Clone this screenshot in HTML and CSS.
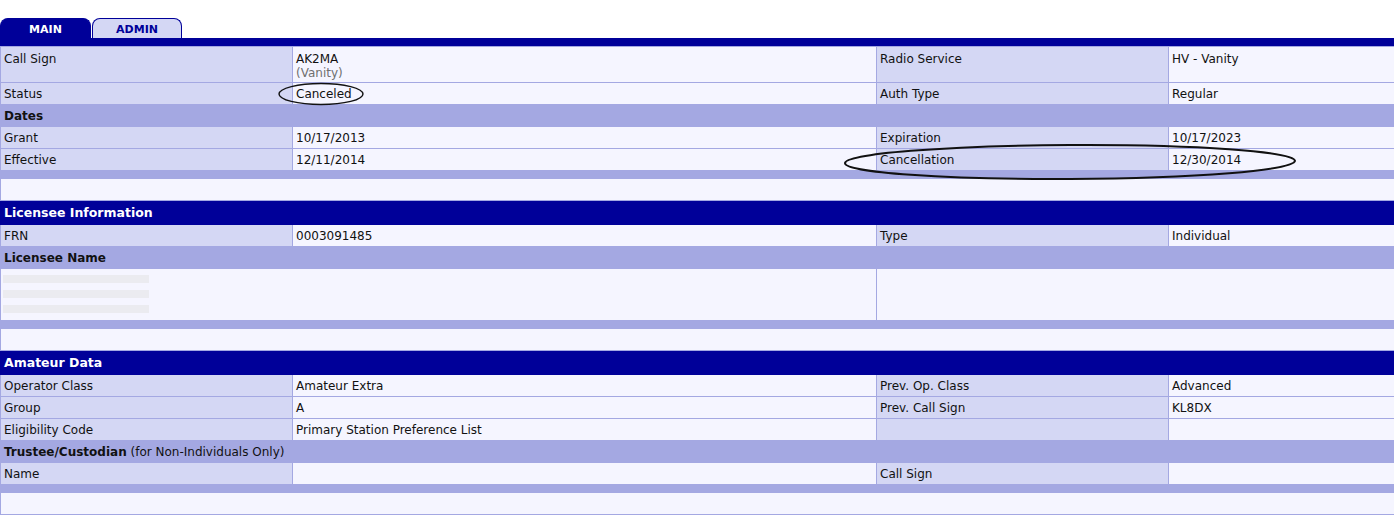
FILE: index.html
```html
<!DOCTYPE html>
<html>
<head>
<meta charset="utf-8">
<link rel="stylesheet" href="styles.css">
</head>
<body>
<div class="page">
  <div class="tabs">
    <div class="tab tab-active">MAIN</div>
    <div class="tab tab-idle">ADMIN</div>
  </div>
  <div class="topbar"></div>
  <table class="lic">
    <colgroup>
      <col class="c1"><col class="c2"><col class="c3"><col class="c4">
    </colgroup>
    <tr>
      <td class="lab tall">Call Sign</td>
      <td class="val tall">AK2MA<br><span class="sub">(Vanity)</span></td>
      <td class="lab tall">Radio Service</td>
      <td class="val tall">HV - Vanity</td>
    </tr>
    <tr>
      <td class="lab">Status</td><td class="val">Canceled</td>
      <td class="lab">Auth Type</td><td class="val">Regular</td>
    </tr>
    <tr><td class="med" colspan="4"><b>Dates</b></td></tr>
    <tr>
      <td class="lab">Grant</td><td class="val">10/17/2013</td>
      <td class="lab">Expiration</td><td class="val">10/17/2023</td>
    </tr>
    <tr>
      <td class="lab">Effective</td><td class="val">12/11/2014</td>
      <td class="lab">Cancellation</td><td class="val">12/30/2014</td>
    </tr>
    <tr><td class="strip" colspan="4"></td></tr>
    <tr><td class="blank" colspan="4"></td></tr>

    <tr><td class="dark" colspan="4">Licensee Information</td></tr>
    <tr>
      <td class="lab">FRN</td><td class="val">0003091485</td>
      <td class="lab">Type</td><td class="val">Individual</td>
    </tr>
    <tr><td class="med" colspan="4"><b>Licensee Name</b></td></tr>
    <tr>
      <td class="val namebox" colspan="2">
        <div class="redact"><span></span><span></span><span></span></div>
      </td>
      <td class="val namebox" colspan="2"></td>
    </tr>
    <tr><td class="strip" colspan="4"></td></tr>
    <tr><td class="blank" colspan="4"></td></tr>

    <tr><td class="dark" colspan="4">Amateur Data</td></tr>
    <tr>
      <td class="lab">Operator Class</td><td class="val">Amateur Extra</td>
      <td class="lab">Prev. Op. Class</td><td class="val">Advanced</td>
    </tr>
    <tr>
      <td class="lab">Group</td><td class="val">A</td>
      <td class="lab">Prev. Call Sign</td><td class="val">KL8DX</td>
    </tr>
    <tr>
      <td class="lab">Eligibility Code</td><td class="val">Primary Station Preference List</td>
      <td class="lab"></td><td class="val"></td>
    </tr>
    <tr><td class="med" colspan="4"><b>Trustee/Custodian</b> (for Non-Individuals Only)</td></tr>
    <tr>
      <td class="lab">Name</td><td class="val"></td>
      <td class="lab">Call Sign</td><td class="val"></td>
    </tr>
    <tr><td class="strip" colspan="4"></td></tr>
    <tr><td class="blank" colspan="4"></td></tr>
  </table>

  <svg class="marks" width="1394" height="531" viewBox="0 0 1394 531">
    <ellipse cx="321" cy="94" rx="42" ry="10.5" fill="none" stroke="#111" stroke-width="1.4"/>
    <ellipse cx="1070" cy="162" rx="225" ry="17" fill="none" stroke="#111" stroke-width="2" transform="rotate(-0.3 1070 162)"/>
  </svg>
</div>
</body>
</html>
```
FILE: styles.css
```css
html, body {
  margin: 0;
  padding: 0;
  background: #ffffff;
}
.page {
  position: relative;
  width: 1394px;
  padding-top: 18px;
  font-family: "DejaVu Sans", Verdana, sans-serif;
  font-size: 12px;
  color: #111;
}
.tabs {
  display: flex;
  gap: 1px;
  height: 20px;
}
.tab {
  width: 88px;
  height: 19px;
  border-radius: 8px 8px 0 0;
  font-weight: bold;
  font-size: 11px;
  line-height: 22px;
  text-align: center;
  border: 1px solid #000099;
  border-bottom: none;
}
.tab-active {
  background: #000099;
  color: #ffffff;
  width: 89px;
}
.tab-idle {
  background: #d4d7f4;
  color: #000099;
}
.topbar {
  height: 8px;
  background: #000099;
}
.lic {
  width: 1394px;
  border-collapse: collapse;
  table-layout: fixed;
}
.c1 { width: 292px; }
.c2 { width: 584px; }
.c3 { width: 292px; }
.c4 { width: 226px; }
.lic td {
  border: 1px solid #a4a8e2;
  padding: 4px 3px 2px 3px;
  height: 15px;
  line-height: 15px;
  vertical-align: top;
}
.lic td.lab { background: #d4d7f4; }
.lic td.val { background: #f5f5ff; }
.lic td.tall { height: 29px; line-height: 14px; padding-top: 5px; padding-bottom: 1px; }
.sub { color: #707070; }
.lic td.med {
  background: #a4a8e2;
  border-color: #a4a8e2;
  color: #111;
}
.lic td.dark {
  background: #000099;
  border-color: #000099;
  color: #ffffff;
  font-weight: bold;
  font-size: 12.5px;
  height: 17px;
  line-height: 17px;
  padding-top: 3px;
  padding-bottom: 3px;
}
.lic td.strip {
  background: #a4a8e2;
  border-color: #a4a8e2;
  height: 7px;
  padding: 0;
}
.lic td.blank {
  background: #f5f5ff;
  height: 15px;
}
.lic td.namebox {
  height: 45px;
  padding: 6px 2px 0 2px;
}
.redact {
  display: flex;
  flex-direction: column;
  gap: 7px;
  width: 146px;
}
.redact span {
  display: block;
  height: 8px;
  background: #ebebf0;
}
.marks {
  position: absolute;
  left: 0;
  top: 0;
  pointer-events: none;
}
```
